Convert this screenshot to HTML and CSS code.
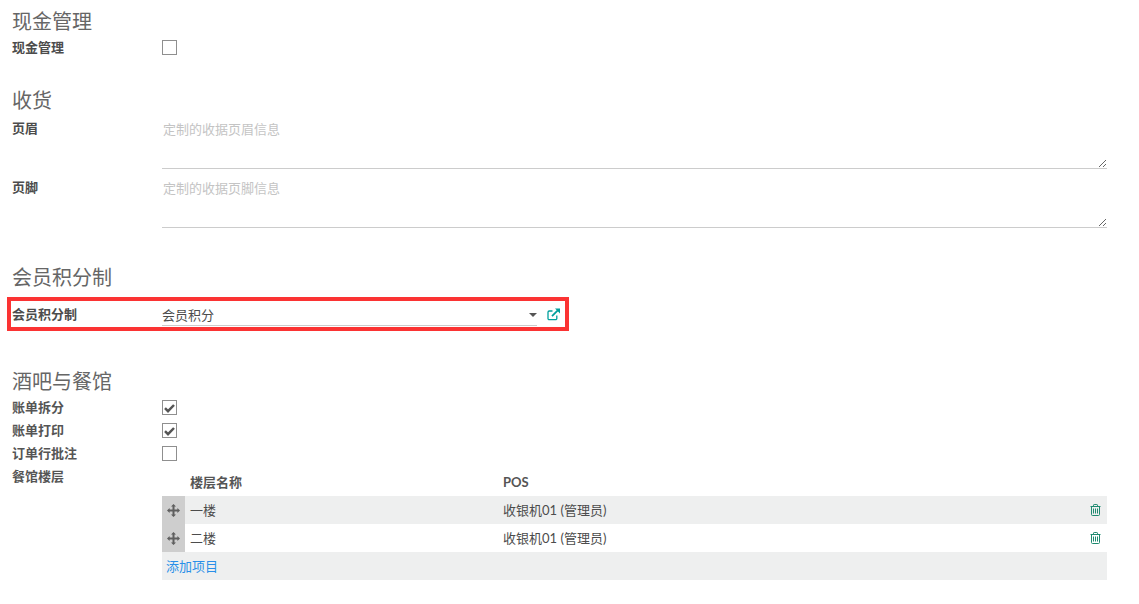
FILE: index.html
```html
<!DOCTYPE html>
<html lang="zh">
<head>
<meta charset="utf-8">
<title>POS 设置</title>
<link rel="stylesheet" href="styles.css">
</head>
<body>
<main class="page">
  <section class="sec sec-cash">
    <h2 class="title">现金管理</h2>
    <div class="row"><label class="lbl">现金管理</label><span class="check"></span></div>
  </section>

  <section class="sec sec-receipt">
    <h2 class="title">收货</h2>
    <div class="row row-text"><label class="lbl">页眉</label><textarea class="area" placeholder="定制的收据页眉信息"></textarea></div>
    <div class="row row-text"><label class="lbl">页脚</label><textarea class="area" placeholder="定制的收据页脚信息"></textarea></div>
  </section>

  <section class="sec sec-loyalty">
    <h2 class="title">会员积分制</h2>
    <div class="redbox">
      <label class="lbl">会员积分制</label>
      <div class="select"><span>会员积分</span><i class="caret"></i></div>
      <svg class="ext" width="13" height="13" viewBox="0 0 13 13" fill="none" stroke="#00a09d" stroke-width="1.3"><path d="M9.8 7.5v3a1.2 1.2 0 0 1-1.2 1.2H2.2A1.2 1.2 0 0 1 1 10.500V4.200A1.200 1.200 0 0 1 2.200 3h3.300"/><path d="M5 8.200 11.500 1.700" stroke-width="1.700"/><path d="M8 .5h5v5z" fill="#00a09d" stroke="none"/></svg>
    </div>
  </section>

  <section class="sec sec-bar">
    <h2 class="title">酒吧与餐馆</h2>
    <div class="row"><label class="lbl lbl-soft">账单拆分</label><span class="check"><svg width="11" height="10" viewBox="0 0 11 10"><path d="M1 5.200 4 8.200 10 2" fill="none" stroke="#555" stroke-width="2.500"/></svg></span></div>
    <div class="row"><label class="lbl lbl-soft">账单打印</label><span class="check"><svg width="11" height="10" viewBox="0 0 11 10"><path d="M1 5.200 4 8.200 10 2" fill="none" stroke="#555" stroke-width="2.500"/></svg></span></div>
    <div class="row"><label class="lbl lbl-soft">订单行批注</label><span class="check"></span></div>
    <div class="row row-table">
      <label class="lbl lbl-soft">餐馆楼层</label>
      <div class="table">
        <div class="thead"><span class="handle-space"></span><span class="c-name">楼层名称</span><span class="c-pos">POS</span></div>
        <div class="tr tr-odd">
          <span class="handle"><svg width="13" height="13" viewBox="0 0 13 13" fill="#5f5f5f"><path d="M6.500 0 9 2.600H7.500V5.500H10.400V4L13 6.500 10.400 9V7.500H7.500V10.400H9L6.500 13 4 10.400H5.500V7.500H2.600V9L0 6.500 2.600 4V5.500H5.500V2.600H4z"/></svg></span>
          <span class="c-name">一楼</span><span class="c-pos">收银机01 (管理员)</span>
          <svg class="trash" width="11" height="12" viewBox="0 0 11 12" fill="none" stroke="#1f8a70"><path d="M.5 2.500h10M1.500 2.500v8a1 1 0 0 0 1 1h6a1 1 0 0 0 1-1v-8M3.500 2.500V1.200a.7.7 0 0 1 .7-.7h2.600a.7.7 0 0 1 .7.7v1.300M3.500 4.500v5M5.500 4.500v5M7.500 4.500v5"/></svg>
        </div>
        <div class="tr">
          <span class="handle"><svg width="13" height="13" viewBox="0 0 13 13" fill="#5f5f5f"><path d="M6.500 0 9 2.600H7.500V5.500H10.400V4L13 6.500 10.400 9V7.500H7.500V10.400H9L6.500 13 4 10.400H5.500V7.500H2.600V9L0 6.500 2.600 4V5.500H5.500V2.600H4z"/></svg></span>
          <span class="c-name">二楼</span><span class="c-pos">收银机01 (管理员)</span>
          <svg class="trash" width="11" height="12" viewBox="0 0 11 12" fill="none" stroke="#1f8a70"><path d="M.5 2.500h10M1.500 2.500v8a1 1 0 0 0 1 1h6a1 1 0 0 0 1-1v-8M3.500 2.500V1.200a.7.7 0 0 1 .7-.7h2.600a.7.7 0 0 1 .7.7v1.300M3.500 4.500v5M5.500 4.500v5M7.500 4.500v5"/></svg>
        </div>
        <div class="tr tr-odd tr-add"><a class="add" href="#">添加项目</a></div>
      </div>
    </div>
  </section>
</main>
</body>
</html>
```
FILE: styles.css
```css
* { box-sizing: border-box; }
html, body { margin: 0; padding: 0; background: #fff; }
body {
  font-family: Lato, "Noto Sans CJK SC", sans-serif;
  font-size: 13px;
  color: #4c4c4c;
  overflow: hidden;
}
.page { padding: 6px 32px 0 12px; }
.title {
  margin: 0;
  height: 30px;
  line-height: 30px;
  font-size: 20px;
  font-weight: 400;
  color: #666;
}
.sec-receipt { margin-top: 26px; }
.sec-loyalty { margin-top: 29px; }
.sec-bar { margin-top: 35px; }
.row {
  display: flex;
  align-items: center;
  height: 23px;
}
.lbl {
  flex: 0 0 150px;
  font-weight: 700;
  font-size: 13px;
  line-height: 23px;
  color: #4c4c4c;
}
.lbl-soft { color: #555; }
.check {
  width: 15px;
  height: 15px;
  border: 1px solid #8f8f8f;
  display: flex;
  align-items: center;
  justify-content: center;
  background: #fff;
}
.row-text {
  height: 59px;
  align-items: flex-start;
}
.row-text .lbl { line-height: 26px; }
.area {
  flex: 1;
  display: block;
  height: 54px;
  margin: 0;
  padding: 3px 0 0 1px;
  border: 0;
  border-bottom: 1px solid #ccc;
  outline: 0;
  background: transparent;
  font: 13px/22px Lato, "Noto Sans CJK SC", sans-serif;
  color: #4c4c4c;
}
.area::placeholder { color: #c4c4c4; opacity: 1; }
.redbox {
  display: flex;
  align-items: center;
  width: 562px;
  height: 34px;
  margin: 5px 0 0 -5px;
  padding-left: 1px;
  border: 4px solid #fb3333;
}
.select {
  display: flex;
  align-items: center;
  justify-content: space-between;
  width: 375px;
  height: 24px;
  padding-top: 1px;
  border-bottom: 1px solid #ccc;
  color: #4c4c4c;
}
.caret {
  width: 0;
  height: 0;
  margin-top: 2px;
  border-left: 4px solid transparent;
  border-right: 4px solid transparent;
  border-top: 4px solid #555;
}
.ext { margin-left: 10px; }
.row-table { height: auto; align-items: flex-start; }
.table { flex: 1; }
.thead, .tr {
  display: flex;
  align-items: center;
  height: 28px;
}
.thead {
  height: 31px;
  padding-top: 2px;
  font-weight: 700;
  color: #555;
}
.handle-space, .handle {
  flex: 0 0 23px;
  height: 28px;
}
.handle {
  display: flex;
  align-items: center;
  justify-content: center;
  background: #cecece;
}
.c-name { flex: 0 0 318px; padding-left: 5px; }
.c-pos { flex: 1; }
.tr .c-name, .tr .c-pos, .add { margin-top: -2px; }
.tr-odd { background: #eeefef; }
.trash { margin-right: 6px; }
.tr-add { padding-left: 4px; }
.add { color: #2a8fe8; text-decoration: none; }
```
